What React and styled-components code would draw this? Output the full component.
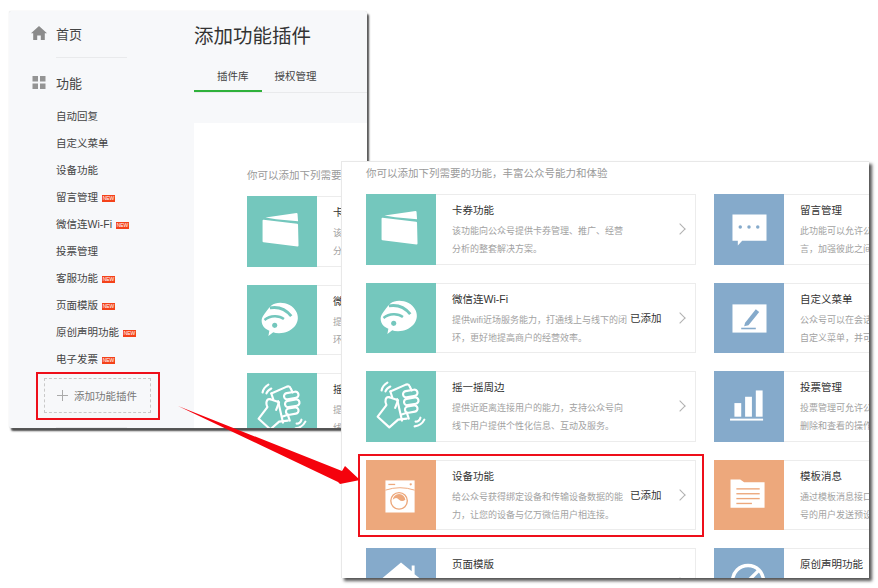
import React from 'react'
import styled, { createGlobalStyle } from 'styled-components'

const GlobalStyle = createGlobalStyle`
  html, body { margin: 0; padding: 0; background: #fff; }
  body { font-family: "Liberation Sans", "Noto Sans CJK SC", sans-serif; }
`

const Canvas = styled.div`
  position: relative;
  width: 878px;
  height: 588px;
  overflow: hidden;
  background: #fff;
`

const BackWindow = styled.div`
  position: absolute;
  left: 9px;
  top: 11px;
  width: 358px;
  height: 417px;
  display: flex;
  overflow: hidden;
  background: #f7f8fa;
  border-radius: 2px;
  box-shadow: 0 0 1px #ccc, 2px 3px 2px #4a4a4a;
`

const FrontWindow = styled.div`
  position: absolute;
  left: 341px;
  top: 161px;
  width: 528px;
  height: 417px;
  overflow: hidden;
  background: #fff;
  border-top: 1px solid #e8e8e8;
  border-left: 1px solid #e8e8e8;
  box-sizing: border-box;
  box-shadow: 3px 3px 3px #555;
`

const Sidebar = styled.nav`
  width: 185px;
  flex: none;
  padding-top: 9px;
  box-sizing: border-box;
`

const NavHead = styled.div`
  display: flex;
  align-items: center;
  height: 26px;
  padding-left: 22px;
  gap: 9px;
  font-size: 13px;
  color: #444;
`

const Rule = styled.div`
  width: 71px;
  height: 1px;
  margin: ${p => p.$margin};
  background: #e9eaec;
`

const NavList = styled.div`
  margin-top: 7px;
`

const NavItem = styled.div`
  display: flex;
  align-items: center;
  height: 27px;
  padding-left: 47px;
  font-size: 10.5px;
  color: #444;
`

const Badge = styled.span`
  width: 13px;
  height: 7px;
  margin: 3px 0 0 4px;
  background: #f4421a;
  color: #fff;
  font-size: 5px;
  line-height: 7px;
  text-align: center;
  overflow: hidden;
`

const AddOutline = styled.div`
  width: 124px;
  height: 48px;
  margin-left: 27px;
  box-sizing: border-box;
  border: 2px solid #ee0f1a;
  padding: 4px 0 0 6px;
`

const AddButton = styled.div`
  width: 107px;
  height: 35px;
  box-sizing: border-box;
  display: flex;
  align-items: center;
  padding-left: 12px;
  gap: 6px;
  border: 1px dashed #c9c9c9;
  font-size: 10.5px;
  color: #777;
`

const Main = styled.main`
  flex: 1;
  min-width: 0;
  display: flex;
  flex-direction: column;
`

const Title = styled.h1`
  flex: none;
  margin: 0;
  height: 49px;
  padding-top: 10px;
  box-sizing: border-box;
  font-size: 19.5px;
  line-height: 30px;
  font-weight: 400;
  color: #333;
`

const TabBar = styled.div`
  flex: none;
  display: flex;
  height: 32px;
  border-bottom: 1px solid #e9eaec;
`

const Tab = styled.div`
  height: 32px;
  padding: ${p => (p.$active ? '0 13px 0 23px' : '0 0 0 13px')};
  box-sizing: border-box;
  line-height: 32px;
  font-size: 10.5px;
  color: #444;
  border-bottom: ${p => (p.$active ? '2px solid #2fb13b' : 'none')};
`

const Panel = styled.section`
  flex: 1;
  min-height: 0;
  margin-top: 30px;
  padding: 46px 0 0 53px;
  background: #fff;
`

const Intro = styled.p`
  margin: 0 0 7px;
  height: 20px;
  font-size: 10.5px;
  line-height: 13px;
  white-space: nowrap;
  color: #999;
`

const CardColumn = styled.div`
  display: flex;
  flex-direction: column;
  gap: 18px;
  width: 330px;
  flex: none;
`

const FrontBody = styled.div`
  padding: 5px 0 0 24px;
`

const CardGrid = styled.div`
  display: flex;
  gap: 18px;
`

const Card = styled.article`
  position: relative;
  display: flex;
  align-items: center;
  flex: none;
  height: 70.5px;
  box-sizing: border-box;
  border: 1px solid #ececec;
  border-left: none;
  background: #fff;

  ${p => p.$highlight && `
    &::after {
      content: "";
      position: absolute;
      left: -8px;
      right: -9px;
      top: -7px;
      bottom: -8px;
      border: 2px solid #ee0f1a;
    }
  `}
`

const Tile = styled.div`
  width: 70px;
  height: 70.5px;
  margin: -1px 0;
  flex: none;
  background: ${p => p.$color};

  svg { display: block; }
`

const CardText = styled.div`
  width: 172px;
  flex: none;
  align-self: flex-start;
  margin-left: 16px;
  padding-top: 8px;
  white-space: nowrap;
`

const CardTitle = styled.h3`
  margin: 0 0 5px;
  font-size: 10.5px;
  line-height: 14px;
  font-weight: 400;
  color: #333;
`

const CardLine = styled.div`
  font-size: 9px;
  line-height: 18px;
  color: #a2a2a2;
`

const Added = styled.span`
  position: absolute;
  left: 264px;
  font-size: 10.5px;
  color: #333;
`

const Chevron = styled.span`
  position: absolute;
  right: 11px;
  width: 7px;
  height: 7px;
  border-top: 1.5px solid #b0b0b0;
  border-right: 1.5px solid #b0b0b0;
  transform: rotate(45deg);
`

const Overlay = styled.svg`
  position: absolute;
  left: 0;
  top: 0;
  pointer-events: none;
`

const TEAL = '#74c7bd'
const BLUE = '#85aacb'
const ORANGE = '#eda87c'

const IconFrame = ({ children }) => (
  <svg width="70" height="70" viewBox="0 0 72 72">{children}</svg>
)

const WalletIcon = () => (
  <IconFrame>
    <path d="M19 22 L51 17.5 Q52 17.5 52 18.5 L52.5 26 L30 24 Z" fill="#fff" />
    <path d="M17 24.5 L51.5 28.5 Q52.5 28.6 52.5 29.5 L53 51 Q53 52 52 52 L17 47.5 Q16 47.4 16 46.5 L16 25.5 Q16 24.4 17 24.5 Z" fill="#fff" />
  </IconFrame>
)

const WifiIcon = ({ color }) => (
  <IconFrame>
    <path d="M25 21 C32 16 46 18 51 28 C56 39 46 49.5 33 49.5 Q29 49.5 27 48.5 L22 52.5 L23 47 C16 45 13 37 16.5 32 C19 28 22 24 25 21 Z" fill="#fff" />
    <path d="M23.5 23.5 C32 22 40 25 45.5 32" stroke={color} strokeWidth="3" fill="none" />
    <path d="M18 36 C24 31 33 31 38 35" stroke={color} strokeWidth="2.4" fill="none" />
    <circle cx="28.5" cy="41.5" r="2.6" fill={color} />
  </IconFrame>
)

const HandIcon = () => (
  <IconFrame>
    <g fill="none" stroke="#fff" strokeWidth="2.2" strokeLinecap="round" strokeLinejoin="round">
      <path d="M25 21 L41 14 Q44 13 45 16 L47 20" />
      <path d="M25 21 L27 27" />
      <path d="M32 29 L37 51" />
      <path d="M24 27 C20 26 19 31 21 35 L12 47 L24 58 L33 50 L42 49" />
      <path d="M24 27 L33 30 L30 38" />
      <rect x="38" y="20" width="15" height="6.5" rx="3.2" transform="rotate(-10 45 23)" />
      <rect x="39" y="28" width="15" height="6.5" rx="3.2" transform="rotate(-10 46 31)" />
      <rect x="40" y="36" width="13" height="6.5" rx="3.2" transform="rotate(-10 46 39)" />
      <path d="M36 45 L42 43 L44 49" />
      <path d="M16 20 Q17 15 22 12" />
      <path d="M20 21 Q21 18 25 16" />
      <path d="M51 52 Q55 52 56 48" />
      <path d="M50 57 Q57 56 60 50" />
    </g>
  </IconFrame>
)

const WasherIcon = ({ color }) => (
  <IconFrame>
    <rect x="20" y="21" width="30" height="33" fill="#fff" />
    <path d="M20 31 Q35 26 50 31" stroke={color} strokeWidth="1" fill="none" />
    <rect x="23" y="24.5" width="7" height="1.3" fill={color} />
    <circle cx="46" cy="25" r="1.2" fill={color} />
    <circle cx="34" cy="42" r="8.5" fill="none" stroke={color} strokeWidth="1.4" />
    <path d="M27.5 41 Q31 37 34 41 Q37 43.5 40.5 41 A7 7 0 0 0 34 35 A7 7 0 0 0 27.5 41 Z" fill={color} />
  </IconFrame>
)

const CommentIcon = ({ color }) => (
  <IconFrame>
    <path d="M19 21 H54 V48 H29 L24.5 53 V48 H19 Z" fill="#fff" />
    <circle cx="27" cy="34" r="1.8" fill={color} />
    <circle cx="36" cy="34" r="1.8" fill={color} />
    <circle cx="45" cy="34" r="1.8" fill={color} />
  </IconFrame>
)

const PencilIcon = ({ color }) => (
  <IconFrame>
    <rect x="19" y="22" width="35" height="29" fill="#fff" />
    <path d="M32 41 L43 27 L46.5 29.8 L35.5 43.5 L31 44.5 Z" fill={color} />
    <rect x="28" y="46" width="15" height="1.6" fill={color} />
  </IconFrame>
)

const BarsIcon = () => (
  <IconFrame>
    <rect x="21" y="33" width="7" height="14" fill="#fff" />
    <rect x="32" y="26.5" width="7" height="20.5" fill="#fff" />
    <rect x="43" y="20" width="7" height="27" fill="#fff" />
    <rect x="16.5" y="49" width="34" height="2" fill="#fff" />
  </IconFrame>
)

const DocIcon = ({ color }) => (
  <IconFrame>
    <path d="M17 20 H27 L31 23 H52 V49 H17 Z" fill="#fff" />
    <rect x="23" y="29" width="24" height="1.4" fill={color} />
    <rect x="23" y="34" width="24" height="1.4" fill={color} />
    <rect x="23" y="39" width="24" height="1.4" fill={color} />
    <rect x="23" y="44" width="16" height="1.4" fill={color} />
  </IconFrame>
)

const HouseIcon = () => (
  <IconFrame>
    <path d="M36 15 L47 24 V18 H50 V27 L60 35 H12 Z" fill="#fff" />
    <rect x="18" y="35" width="36" height="24" fill="#fff" />
  </IconFrame>
)

const NoSignIcon = () => (
  <IconFrame>
    <circle cx="35" cy="34" r="16" fill="none" stroke="#fff" strokeWidth="3.5" />
    <path d="M24 45 L46 23" stroke="#fff" strokeWidth="3.5" />
  </IconFrame>
)

const HomeGlyph = () => (
  <svg width="16" height="14" viewBox="0 0 16 14">
    <path d="M8 0 L16 7.2 H13.8 V14 H9.8 V9.5 H6.2 V14 H2.2 V7.2 H0 Z" fill="#8b8b8b" />
  </svg>
)

const GridGlyph = () => (
  <svg width="16" height="13" viewBox="0 0 16 13">
    <path d="M1.5 0 H7 V5.5 H1.5 Z M9 0 H14.5 V5.5 H9 Z M1.5 7.5 H7 V13 H1.5 Z M9 7.5 H14.5 V13 H9 Z" fill="#949494" />
  </svg>
)

const PlusGlyph = () => (
  <svg width="11" height="11" viewBox="0 0 11 11">
    <path d="M5.5 0 V11 M0 5.5 H11" stroke="#aaa" strokeWidth="1" />
  </svg>
)

const navItems = [
  { label: '自动回复' },
  { label: '自定义菜单' },
  { label: '设备功能' },
  { label: '留言管理', badge: true },
  { label: '微信连Wi-Fi', badge: true },
  { label: '投票管理' },
  { label: '客服功能', badge: true },
  { label: '页面模版', badge: true },
  { label: '原创声明功能', badge: true },
  { label: '电子发票', badge: true },
]

const leftCards = [
  {
    title: '卡券功能',
    lines: ['该功能向公众号提供卡券管理、推广、经营', '分析的整套解决方案。'],
    color: TEAL,
    Icon: WalletIcon,
  },
  {
    title: '微信连Wi-Fi',
    lines: ['提供wifi近场服务能力，打通线上与线下的闭', '环，更好地提高商户的经营效率。'],
    color: TEAL,
    Icon: WifiIcon,
    added: true,
  },
  {
    title: '摇一摇周边',
    lines: ['提供近距离连接用户的能力，支持公众号向', '线下用户提供个性化信息、互动及服务。'],
    color: TEAL,
    Icon: HandIcon,
  },
  {
    title: '设备功能',
    lines: ['给公众号获得绑定设备和传输设备数据的能', '力，让您的设备与亿万微信用户相连接。'],
    color: ORANGE,
    Icon: WasherIcon,
    added: true,
    highlight: true,
  },
  { title: '页面模版', lines: [], color: BLUE, Icon: HouseIcon, added: true },
]

const rightCards = [
  { title: '留言管理', lines: ['此功能可以允许公众号', '言，加强彼此之间的'], color: BLUE, Icon: CommentIcon },
  { title: '自定义菜单', lines: ['公众号可以在会话界面', '自定义菜单，并可为其'], color: BLUE, Icon: PencilIcon },
  { title: '投票管理', lines: ['投票管理可允许公众号', '删除和查看的操作'], color: BLUE, Icon: BarsIcon },
  { title: '模板消息', lines: ['通过模板消息接口向公', '号的用户发送预设模板'], color: ORANGE, Icon: DocIcon },
  { title: '原创声明功能', lines: [], color: BLUE, Icon: NoSignIcon },
]

const PluginCard = ({ title, lines, color, Icon, added, highlight }) => (
  <Card $highlight={highlight}>
    <Tile $color={color}>
      <Icon color={color} />
    </Tile>
    <CardText>
      <CardTitle>{title}</CardTitle>
      {lines.map(line => (
        <CardLine key={line}>{line}</CardLine>
      ))}
    </CardText>
    {added && <Added>已添加</Added>}
    <Chevron />
  </Card>
)

export default function App() {
  return (
    <Canvas>
      <GlobalStyle />
      <BackWindow>
        <Sidebar>
          <NavHead>
            <HomeGlyph />
            首页
          </NavHead>
          <Rule $margin="11px 0 11px 47px" />
          <NavHead>
            <GridGlyph />
            功能
          </NavHead>
          <NavList>
            {navItems.map(item => (
              <NavItem key={item.label}>
                {item.label}
                {item.badge && <Badge>NEW</Badge>}
              </NavItem>
            ))}
          </NavList>
          <AddOutline>
            <AddButton>
              <PlusGlyph />
              添加功能插件
            </AddButton>
          </AddOutline>
          <Rule $margin="7px 0 0 47px" />
        </Sidebar>
        <Main>
          <Title>添加功能插件</Title>
          <TabBar>
            <Tab $active>插件库</Tab>
            <Tab>授权管理</Tab>
          </TabBar>
          <Panel>
            <Intro>你可以添加下列需要的功能，丰富公众号能力和体验</Intro>
            <CardColumn>
              {leftCards.slice(0, 3).map(card => (
                <PluginCard key={card.title} {...card} />
              ))}
            </CardColumn>
          </Panel>
        </Main>
      </BackWindow>
      <FrontWindow>
        <FrontBody>
          <Intro>你可以添加下列需要的功能，丰富公众号能力和体验</Intro>
          <CardGrid>
            <CardColumn>
              {leftCards.map(card => (
                <PluginCard key={card.title} {...card} />
              ))}
            </CardColumn>
            <CardColumn>
              {rightCards.map(card => (
                <PluginCard key={card.title} {...card} />
              ))}
            </CardColumn>
          </CardGrid>
        </FrontBody>
      </FrontWindow>
      <Overlay width="878" height="588" viewBox="0 0 878 588">
        <path d="M178 406 L342 471 L345 466 L360 480 L340 484 L338 482 Z" fill="#f5020c" />
      </Overlay>
    </Canvas>
  )
}
